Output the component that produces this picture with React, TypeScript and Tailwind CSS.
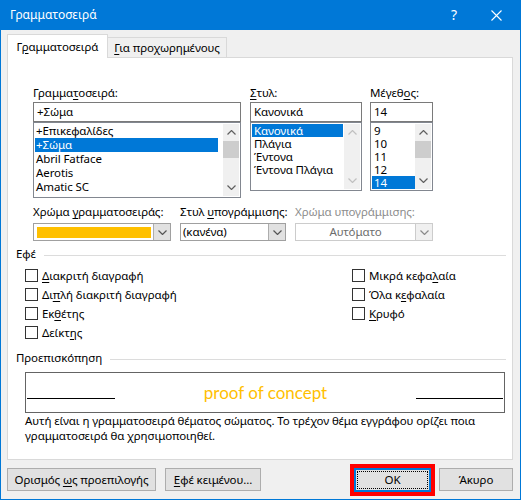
import React from "react";

const U = ({ children }: { children: React.ReactNode }) => (
  <span className="underline underline-offset-[2px] decoration-[1px]">{children}</span>
);

function Chev({ up = false, color = "#606060", w = 9, h = 5 }: { up?: boolean; color?: string; w?: number; h?: number }) {
  return (
    <svg width={w} height={h} viewBox={`0 0 ${w} ${h}`}>
      {up ? (
        <polyline points={`0.5,${h - 0.5} ${w / 2},0.5 ${w - 0.5},${h - 0.5}`} fill="none" stroke={color} strokeWidth="1.2" />
      ) : (
        <polyline points={`0.5,0.5 ${w / 2},${h - 0.5} ${w - 0.5},0.5`} fill="none" stroke={color} strokeWidth="1.2" />
      )}
    </svg>
  );
}

function ScrollBar({ disabled = false }: { disabled?: boolean }) {
  const c = disabled ? "#c0c0c0" : "#606060";
  return (
    <div className="w-[16px] h-full bg-[#f0f0f0] flex flex-col shrink-0">
      <div className="h-[17px] flex items-center justify-center shrink-0">
        <Chev up color={c} w={9} h={5} />
      </div>
      {!disabled && <div className="h-[17px] bg-[#cdcdcd] shrink-0" />}
      <div className="flex-1" />
      <div className="h-[17px] flex items-center justify-center shrink-0">
        <Chev color={c} w={9} h={5} />
      </div>
    </div>
  );
}

function Dropdown({ w, children, disabled = false }: { w: string; children: React.ReactNode; disabled?: boolean }) {
  return (
    <div className={`${w} h-[18px] bg-white border ${disabled ? "border-[#cccccc]" : "border-[#a0a0a0]"} flex`}>
      <div className="flex-1 flex items-center min-w-0">{children}</div>
      <div
        className={`w-[17px] h-full border-l ${disabled ? "border-[#cccccc] bg-[#f0f0f0]" : "border-[#adadad] bg-[#e1e1e1]"} flex items-center justify-center`}
      >
        <Chev color={disabled ? "#8a8a8a" : "#555555"} w={9} h={5} />
      </div>
    </div>
  );
}

function Check({ children }: { children: React.ReactNode }) {
  return (
    <div className="h-[19px] flex items-center">
      <div className="w-[13px] h-[13px] border border-[#333333] bg-white shrink-0" />
      <div className="ml-[4px] leading-[16px] whitespace-nowrap">{children}</div>
    </div>
  );
}

export default function App() {
  const fontItems = ["+Επικεφαλίδες", "+Σώμα", "Abril Fatface", "Aerotis", "Amatic SC"];
  const styleItems = ["Κανονικά", "Πλάγια", "Έντονα", "Έντονα Πλάγια"];
  const sizeItems = ["9", "10", "11", "12", "14"];
  return (
    <div className="w-[521px] h-[500px] bg-[#f0f0f0] border border-t-0 border-[#0078d7] flex flex-col font-['Noto_Sans',sans-serif] text-[11.5px] tracking-[-0.1px] text-black overflow-hidden">
      {/* Title bar */}
      <div className="h-[30px] -mx-px bg-[#0078d7] flex items-center text-white shrink-0 text-[12px] tracking-normal">
        <div className="ml-[10px] leading-[16px]">Γραμματοσειρά</div>
        <div className="flex-1" />
        <div className="text-[14px] leading-[16px] mr-[34px]">?</div>
        <svg width="11" height="11" viewBox="0 0 11 11" className="mr-[19px]">
          <path d="M0.5 0.5 L10.5 10.5 M10.5 0.5 L0.5 10.5" stroke="white" strokeWidth="1.1" />
        </svg>
      </div>

      {/* Tabs */}
      <div className="ml-[6px] mt-[4px] flex items-end h-[23px] relative z-10">
        <div className="h-[24px] -mb-px w-[101px] bg-white border border-b-0 border-[#d9d9d9] flex items-center justify-center leading-[16px]">
          <span>
            Γ<U>ρ</U>αμματοσειρά
          </span>
        </div>
        <div className="h-[20px] w-[119px] bg-[#f0f0f0] border border-l-0 border-b-0 border-[#d9d9d9] flex items-center justify-center leading-[16px]">
          <span>
            <U>Γ</U>ια προχωρημένους
          </span>
        </div>
      </div>

      {/* Panel */}
      <div className="ml-[6px] w-[506px] h-[403px] bg-white border border-[#d9d9d9] flex flex-col shrink-0">
        {/* Row 1 */}
        <div className="flex pl-[25px] pt-[27px] items-start">
          <div className="w-[208px] flex flex-col">
            <div className="h-[17px] leading-[16px]">
              Γραμμα<U>τ</U>οσειρά:
            </div>
            <div className="h-[20px] border border-[#7a7a7a] flex items-center pl-[3px] leading-[16px]">+Σώμα</div>
            <div className="h-[76px] border border-[#828790] flex p-[1px]">
              <div className="flex-1 mr-[5px] flex flex-col">
                {fontItems.map((t) => (
                  <div
                    key={t}
                    className={`h-[14px] leading-[14px] pl-[1px] ${t === "+Σώμα" ? "bg-[#0078d7] text-white" : ""}`}
                  >
                    {t}
                  </div>
                ))}
              </div>
              <ScrollBar />
            </div>
          </div>
          <div className="w-[112px] ml-[9px] flex flex-col">
            <div className="h-[17px] leading-[16px]">
              <U>Σ</U>τυλ:
            </div>
            <div className="h-[20px] border border-[#7a7a7a] flex items-center pl-[3px] leading-[16px]">Κανονικά</div>
            <div className="h-[69px] border border-[#828790] flex p-[1px]">
              <div className="flex-1 mr-[1px] flex flex-col">
                {styleItems.map((t) => (
                  <div
                    key={t}
                    className={`h-[13px] leading-[13px] pl-[2px] ${t === "Κανονικά" ? "bg-[#0078d7] text-white" : ""}`}
                  >
                    {t}
                  </div>
                ))}
              </div>
              <ScrollBar disabled />
            </div>
          </div>
          <div className="w-[63px] ml-[8px] flex flex-col">
            <div className="h-[17px] leading-[16px]">
              Μέγεθ<U>ο</U>ς:
            </div>
            <div className="h-[20px] border border-[#7a7a7a] flex items-center pl-[3px] leading-[16px]">14</div>
            <div className="h-[69px] border border-[#828790] flex p-[1px]">
              <div className="flex-1 flex flex-col">
                {sizeItems.map((t) => (
                  <div
                    key={t}
                    className={`h-[13px] leading-[13px] pl-[2px] ${t === "14" ? "bg-[#0078d7] text-white" : ""}`}
                  >
                    {t}
                  </div>
                ))}
              </div>
              <ScrollBar />
            </div>
          </div>
        </div>

        {/* Row 2 */}
        <div className="flex pl-[25px] mt-[6px]">
          <div className="w-[138px] flex flex-col">
            <div className="h-[19px] leading-[16px] whitespace-nowrap">
              Χρώμα <U>γ</U>ραμματοσειράς:
            </div>
            <Dropdown w="w-[138px]">
              <div className="ml-[3px] mr-[2px] h-[11px] flex-1 bg-[#ffc000]" />
            </Dropdown>
          </div>
          <div className="w-[106px] ml-[9px] flex flex-col">
            <div className="h-[19px] leading-[16px] whitespace-nowrap">
              Στυλ <U>υ</U>πογράμμισης:
            </div>
            <Dropdown w="w-[106px]">
              <span className="pl-[2px] leading-[16px]">(κανένα)</span>
            </Dropdown>
          </div>
          <div className="w-[138px] ml-[9px] flex flex-col">
            <div className="h-[19px] leading-[16px] text-[#8d8d8d] whitespace-nowrap">Χρώμα υπογράμμισης:</div>
            <Dropdown w="w-[138px]" disabled>
              <span className="w-full text-center leading-[16px] text-[#6d6d6d]">Αυτόματο</span>
            </Dropdown>
          </div>
        </div>

        {/* Effects */}
        <div className="flex items-center pl-[8px] pr-[6px] mt-[5px] h-[16px]">
          <span className="leading-[16px]">Εφέ</span>
          <div className="flex-1 h-px bg-[#dcdcdc] ml-[8px] mt-[2px]" />
        </div>
        <div className="grid grid-cols-[327px_1fr] pl-[17px] mt-[4px]">
          <div className="flex flex-col">
            <Check>
              <U>Δ</U>ιακριτή διαγραφή
            </Check>
            <Check>
              Δι<U>π</U>λή διακριτή διαγραφή
            </Check>
            <Check>
              Εκ<U>θ</U>έτης
            </Check>
            <Check>
              Δείκτ<U>η</U>ς
            </Check>
          </div>
          <div className="flex flex-col">
            <Check>
              Μικρά κεφα<U>λ</U>αία
            </Check>
            <Check>
              Όλα κ<U>ε</U>φαλαία
            </Check>
            <Check>
              <U>Κ</U>ρυφό
            </Check>
          </div>
        </div>

        {/* Preview */}
        <div className="flex items-center pl-[8px] pr-[6px] mt-[8px] h-[16px]">
          <span className="leading-[16px]">Προεπισκόπηση</span>
          <div className="flex-1 h-px bg-[#dcdcdc] ml-[8px] mt-[2px]" />
        </div>
        <div className="ml-[17px] mt-[6px] w-[480px] h-[41px] border border-[#646464] flex items-center px-[1px]">
          <div className="w-[88px] h-px bg-black mt-[12px]" />
          <div className="flex-1 text-center text-[#ffc000] font-['Lato',sans-serif] text-[17px] tracking-normal leading-[20px]">
            proof of concept
          </div>
          <div className="w-[87px] h-px bg-black mt-[12px]" />
        </div>
        <div className="ml-[17px] w-[480px] leading-[15px]">
          Αυτή είναι η γραμματοσειρά θέματος σώματος. Το τρέχον θέμα εγγράφου ορίζει ποια γραμματοσειρά θα
          χρησιμοποιηθεί.
        </div>
      </div>

      {/* Buttons */}
      <div className="flex items-center ml-[6px] flex-1">
        <button className="w-[149px] h-[23px] bg-[#e1e1e1] border border-[#adadad] leading-[16px]">
          Ορισμός <U>ω</U>ς προεπιλογής
        </button>
        <button className="w-[96px] h-[23px] ml-[9px] bg-[#e1e1e1] border border-[#adadad] leading-[16px]">
          <U>Ε</U>φέ κειμένου...
        </button>
        <div className="ml-[89px] w-[85px] h-[32px] border-[4px] border-[#ff0000] flex">
          <div className="flex-1 border-2 border-[#0078d7] bg-[#e1e1e1] p-px flex">
            <div className="flex-1 border border-dotted border-black flex items-center justify-center leading-[16px]">
              OK
            </div>
          </div>
        </div>
        <button className="w-[74px] h-[23px] ml-[4px] bg-[#e1e1e1] border border-[#adadad] leading-[16px]">
          Άκυρο
        </button>
      </div>
    </div>
  );
}
